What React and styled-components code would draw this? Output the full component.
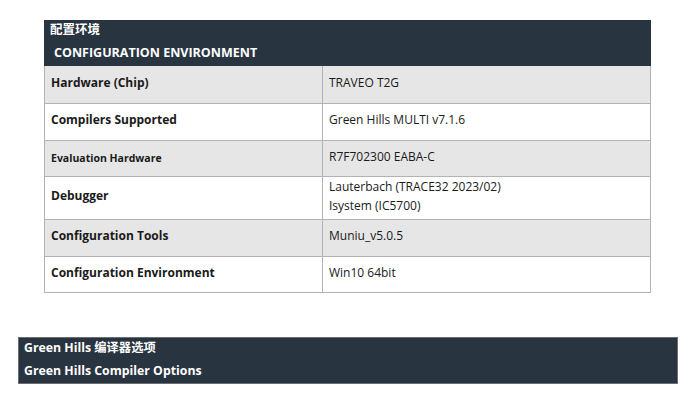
import React from 'react';
import styled, { createGlobalStyle } from 'styled-components';

const GlobalStyle = createGlobalStyle`
  body {
    margin: 0;
    background: #ffffff;
    font-family: "Open Sans", "Noto Sans CJK SC", sans-serif;
    color: #1a1a1a;
  }
`;

const Page = styled.div`
  padding: 20px 0 0 0;
`;

const ConfigTable = styled.div`
  margin-left: 44px;
  width: 607px;
  display: grid;
  grid-template-columns: 277px 1fr;
  border: 1px solid #b3b3b3;
  border-top: none;
  box-sizing: border-box;
`;

const Header = styled.div`
  grid-column: 1 / -1;
  background: #28343f;
  color: #ffffff;
  font-weight: 700;
  font-size: 12.5px;
  height: 46px;
  margin: 0 -1px;
  padding: 0 6px 4px;
  display: flex;
  flex-direction: column;
  justify-content: center;
  gap: 6px;
  line-height: 17px;
  box-sizing: border-box;
`;

const HeaderLine = styled.div`
  padding-left: ${p => p.indent || 0}px;
`;

const Cell = styled.div`
  background: ${p => (p.shaded ? '#e6e6e6' : '#ffffff')};
  height: ${p => p.h}px;
  box-sizing: border-box;
  border-top: ${p => (p.first ? 'none' : '1px solid #b3b3b3')};
  border-left: ${p => (p.value ? '1px solid #b3b3b3' : 'none')};
  padding: 0 6px ${p => (p.small ? 1 : 5)}px;
  display: flex;
  flex-direction: column;
  justify-content: center;
  font-size: ${p => (p.small ? '10.5px' : '12px')};
  font-weight: ${p => (p.value ? 400 : 700)};
  line-height: 19px;
`;

const Banner = styled.div`
  margin: 44px 0 0 18px;
  width: 660px;
  height: 47px;
  box-sizing: border-box;
  background: #28343f;
  border: 1px solid #6b6f73;
  color: #ffffff;
  font-weight: 700;
  font-size: 12.3px;
  line-height: 17px;
  padding: 0 5px 4px;
  display: flex;
  flex-direction: column;
  justify-content: center;
  gap: 6px;
`;

const rows = [
  { label: 'Hardware (Chip)', value: ['TRAVEO T2G'], shaded: true, h: 37 },
  { label: 'Compilers Supported', value: ['Green Hills MULTI v7.1.6'], h: 37 },
  { label: 'Evaluation Hardware', value: ['R7F702300 EABA-C'], shaded: true, h: 36, small: true },
  { label: 'Debugger', value: ['Lauterbach (TRACE32 2023/02)', 'Isystem (IC5700)'], h: 43 },
  { label: 'Configuration Tools', value: ['Muniu_v5.0.5'], shaded: true, h: 37 },
  { label: 'Configuration Environment', value: ['Win10 64bit'], h: 36 },
];

export default function App() {
  return (
    <Page>
      <GlobalStyle />
      <ConfigTable>
        <Header>
          <HeaderLine>配置环境</HeaderLine>
          <HeaderLine indent={4}>CONFIGURATION ENVIRONMENT</HeaderLine>
        </Header>
        {rows.map((r, i) => (
          <React.Fragment key={r.label}>
            <Cell shaded={r.shaded} h={r.h} first={i === 0} small={r.small}>
              {r.label}
            </Cell>
            <Cell shaded={r.shaded} h={r.h} first={i === 0} value>
              {r.value.map(v => (
                <div key={v}>{v}</div>
              ))}
            </Cell>
          </React.Fragment>
        ))}
      </ConfigTable>
      <Banner>
        <div>Green Hills 编译器选项</div>
        <div>Green Hills Compiler Options</div>
      </Banner>
    </Page>
  );
}
